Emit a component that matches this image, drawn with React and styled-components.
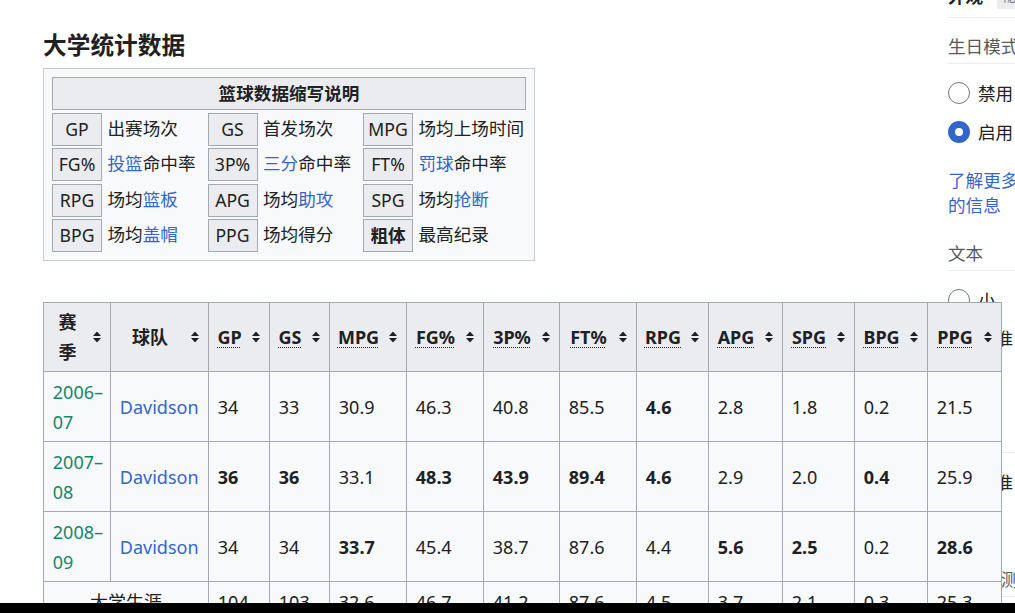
import React from 'react';
import styled, { createGlobalStyle } from 'styled-components';

const GlobalStyle = createGlobalStyle`
  html, body {
    margin: 0;
    padding: 0;
    background: #fff;
  }
  body {
    font-family: "Noto Sans", "Noto Sans CJK SC", sans-serif;
    font-size: 17.6px;
    color: #202122;
    overflow: hidden;
  }
`;

const Page = styled.div`
  display: flex;
  align-items: flex-start;
  gap: 25px;
  width: 1015px;
  height: 613px;
  box-sizing: border-box;
  padding-left: 43px;
  overflow: hidden;
`;

const Main = styled.main`
  width: 880px;
  flex-shrink: 0;
  padding-top: 30px;
`;

const Heading = styled.h3`
  margin: 0;
  font-size: 23.7px;
  font-weight: bold;
  line-height: 30px;
`;

const Legend = styled.div`
  width: 492px;
  box-sizing: border-box;
  margin-top: 8px;
  padding: 8px;
  background: #f8f9fa;
  border: 1px solid #c8ccd1;
  display: grid;
  grid-template-columns: 50px 100.5px 50px 100.5px 50px 1fr;
  grid-auto-rows: 33px;
  gap: 2.5px;
  line-height: 31px;
`;

const LegendTitle = styled.div`
  grid-column: 1 / -1;
  background: #eaecf0;
  border: 1px solid #a2a9b1;
  font-weight: bold;
  text-align: center;
`;

const Abbr = styled.div`
  background: #eaecf0;
  border: 1px solid #a2a9b1;
  text-align: center;
  font-weight: ${p => (p.$bold ? 'bold' : 'normal')};
`;

const Desc = styled.div`
  padding-left: 3px;
  white-space: nowrap;
`;

const Link = styled.a`
  color: #3366cc;
  text-decoration: none;
`;

const Stats = styled.table`
  position: relative;
  z-index: 1;
  margin-top: 41px;
  width: 958px;
  table-layout: fixed;
  border-collapse: collapse;
  background: #f8f9fa;
  border: 1px solid #a2a9b1;
  line-height: 30px;
  font-size: 18px;
`;

const Th = styled.th`
  position: relative;
  padding: 4px 26px 4px 7px;
  background: #eaecf0;
  border: 1px solid #a2a9b1;
  font-weight: bold;
  text-align: center;
  vertical-align: middle;
`;

const Td = styled.td`
  padding: 4.5px 8.8px;
  border: 1px solid #a2a9b1;
  vertical-align: middle;
  text-align: ${p => (p.$center ? 'center' : 'left')};
  font-weight: ${p => (p.$bold ? 'bold' : 'normal')};
  color: ${p => p.$color || '#202122'};
  white-space: nowrap;
`;

const Dotted = styled.span`
  text-decoration: underline dotted;
  text-decoration-thickness: 1px;
  text-underline-offset: 3px;
`;

const SortIcon = styled.svg`
  position: absolute;
  right: 9px;
  top: 50%;
  transform: translateY(-50%);
`;

const Sidebar = styled.aside`
  width: 80px;
  flex-shrink: 0;
  margin-top: -17px;
  line-height: 26px;
`;

const TopBar = styled.div`
  display: flex;
  align-items: center;
  gap: 14px;
  padding-bottom: 8px;
  border-bottom: 1px solid #eaecf0;
  white-space: nowrap;
  font-weight: bold;
`;

const HideButton = styled.span`
  height: 26px;
  padding: 0 6px;
  background: #eaecf0;
  border-radius: 2px;
  color: #72777d;
  font-size: 14px;
  font-weight: normal;
`;

const SectionTitle = styled.div`
  margin-top: ${p => p.$gap || 0}px;
  padding: 15px 0 4px;
  border-bottom: 1px solid #eaecf0;
  color: #54595d;
  white-space: nowrap;
`;

const Options = styled.div`
  margin-top: 10px;
`;

const Option = styled.div`
  display: flex;
  align-items: center;
  gap: 8px;
  height: 38.5px;
  white-space: nowrap;
`;

const Radio = styled.span`
  width: 22px;
  height: 22px;
  box-sizing: border-box;
  border-radius: 50%;
  flex-shrink: 0;
  background: #fff;
  border: ${p => (p.$on ? '7px solid #3366cc' : '1px solid #72777d')};
`;

const More = styled.a`
  display: block;
  margin-top: 17px;
  line-height: 25px;
  color: #3366cc;
  text-decoration: none;
`;

const BottomBar = styled.div`
  position: fixed;
  left: 0;
  right: 0;
  bottom: 0;
  height: 10px;
  background: #000;
  z-index: 5;
`;

const legendRows = [
  [['GP', '出赛场次'], ['GS', '首发场次'], ['MPG', '场均上场时间']],
  [['FG%', <><Link>投篮</Link>命中率</>], ['3P%', <><Link>三分</Link>命中率</>], ['FT%', <><Link>罚球</Link>命中率</>]],
  [['RPG', <>场均<Link>篮板</Link></>], ['APG', <>场均<Link>助攻</Link></>], ['SPG', <>场均<Link>抢断</Link></>]],
  [['BPG', <>场均<Link>盖帽</Link></>], ['PPG', '场均得分'], ['粗体', '最高纪录', true]],
];

const colWidths = [67, 98, 61, 60, 77, 77, 76, 77, 72, 74, 72, 73, 74];
const statCols = ['GP', 'GS', 'MPG', 'FG%', '3P%', 'FT%', 'RPG', 'APG', 'SPG', 'BPG', 'PPG'];

// "!" marks a career-high value (bold)
const seasons = [
  ['2006–', '07', ['34', '33', '30.9', '46.3', '40.8', '85.5', '!4.6', '2.8', '1.8', '0.2', '21.5']],
  ['2007–', '08', ['!36', '!36', '33.1', '!48.3', '!43.9', '!89.4', '!4.6', '2.9', '2.0', '!0.4', '25.9']],
  ['2008–', '09', ['34', '34', '!33.7', '45.4', '38.7', '87.6', '4.4', '!5.6', '!2.5', '0.2', '!28.6']],
];
const career = ['104', '103', '32.6', '46.7', '41.2', '87.6', '4.5', '3.7', '2.1', '0.3', '25.3'];

function Sort() {
  return (
    <SortIcon width="8" height="11" viewBox="0 0 8 11">
      <polygon points="4,0 8,4.6 0,4.6" fill="#202122" />
      <polygon points="0,6.4 8,6.4 4,11" fill="#202122" />
    </SortIcon>
  );
}

function Value({ v }) {
  const bold = v.startsWith('!');
  return <Td $bold={bold}>{bold ? v.slice(1) : v}</Td>;
}

function App() {
  return (
    <>
      <GlobalStyle />
      <Page>
        <Main>
          <Heading>大学统计数据</Heading>
          <Legend>
            <LegendTitle>篮球数据缩写说明</LegendTitle>
            {legendRows.map((row, i) =>
              row.map(([a, d, b]) => (
                <React.Fragment key={i + a}>
                  <Abbr $bold={b}>{a}</Abbr>
                  <Desc>{d}</Desc>
                </React.Fragment>
              ))
            )}
          </Legend>

          <Stats>
            <colgroup>
              {colWidths.map((w, i) => <col key={i} style={{ width: w }} />)}
            </colgroup>
            <thead>
              <tr>
                <Th>赛<br />季<Sort /></Th>
                <Th>球队<Sort /></Th>
                {statCols.map(c => (
                  <Th key={c}><Dotted>{c}</Dotted><Sort /></Th>
                ))}
              </tr>
            </thead>
            <tbody>
              {seasons.map(([a, b, vals]) => (
                <tr key={a + b}>
                  <Td $color="#14866d">{a}<br />{b}</Td>
                  <Td $color="#3366cc">Davidson</Td>
                  {vals.map((v, i) => <Value key={i} v={v} />)}
                </tr>
              ))}
              <tr>
                <Td colSpan={2} $center>大学生涯</Td>
                {career.map((v, i) => <Value key={i} v={v} />)}
              </tr>
            </tbody>
          </Stats>
        </Main>

        <Sidebar>
          <TopBar>外观<HideButton>隐藏</HideButton></TopBar>
          <SectionTitle>生日模式</SectionTitle>
          <Options>
            <Option><Radio />禁用</Option>
            <Option><Radio $on />启用</Option>
          </Options>
          <More>了解更多的信息</More>

          <SectionTitle $gap={6.5}>文本</SectionTitle>
          <Options>
            <Option><Radio />小</Option>
            <Option><Radio $on />标准</Option>
            <Option><Radio />大</Option>
          </Options>

          <SectionTitle $gap={11}>宽度</SectionTitle>
          <Options>
            <Option><Radio $on />标准</Option>
            <Option><Radio />宽</Option>
          </Options>

          <SectionTitle $gap={11}>颜色（测试版）</SectionTitle>
        </Sidebar>
      </Page>
      <BottomBar />
    </>
  );
}

export default App;
